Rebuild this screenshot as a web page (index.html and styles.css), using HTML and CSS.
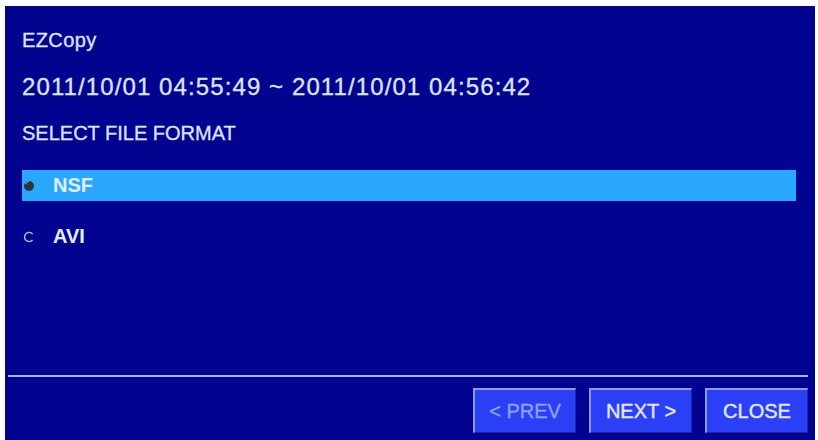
FILE: index.html
```html
<!DOCTYPE html>
<html>
<head>
<meta charset="utf-8">
<link rel="stylesheet" href="styles.css">
</head>
<body>
<div class="panel">
  <div class="title">EZCopy</div>
  <div class="range">2011/10/01 04:55:49 ~ 2011/10/01 04:56:42</div>
  <div class="heading">SELECT FILE FORMAT</div>
  <div class="option selected">
    <svg class="radio" width="14" height="14" viewBox="0 0 14 14"><circle cx="7" cy="7" r="5" fill="#2e3340"/><path d="M3.6 5.2 A4.4 4.4 0 0 1 7 2.4" stroke="#8890a8" stroke-width="1.2" fill="none"/></svg>
    <span class="label">NSF</span>
  </div>
  <div class="option">
    <svg class="radio" width="14" height="14" viewBox="0 0 14 14"><path d="M10.6 4 A4.6 4.6 0 1 0 10.6 10" stroke="#b8c0f0" stroke-width="1.4" fill="none"/></svg>
    <span class="label">AVI</span>
  </div>
  <div class="spacer"></div>
  <div class="rule"></div>
  <div class="buttons">
    <div class="btn disabled">&lt; PREV</div>
    <div class="btn">NEXT &gt;</div>
    <div class="btn">CLOSE</div>
  </div>
</div>
</body>
</html>
```

FILE: styles.css
```css
html, body {
  margin: 0;
  padding: 0;
  background: #ffffff;
}
body {
  padding: 6px 0 0 5px;
  font-family: "Liberation Sans", Arial, sans-serif;
  color: #dde4ff;
}
.panel {
  width: 810px;
  height: 434px;
  box-sizing: border-box;
  background: #020490;
  display: flex;
  flex-direction: column;
  padding: 22px 0 7px 17px;
}
.title {
  font-size: 20px;
  line-height: 24px;
  height: 24px;
  letter-spacing: 0.4px;
  -webkit-text-stroke: 0.3px #dde4ff;
}
.range {
  margin-top: 21px;
  font-size: 24px;
  line-height: 28px;
  height: 28px;
  letter-spacing: 1.1px;
  -webkit-text-stroke: 0.3px #dde4ff;
}
.heading {
  margin-top: 20px;
  font-size: 20px;
  line-height: 24px;
  height: 24px;
  -webkit-text-stroke: 0.3px #dde4ff;
}
.option {
  width: 774px;
  height: 31px;
  display: flex;
  align-items: center;
  box-sizing: border-box;
  padding-left: 0;
}
.option.selected {
  margin-top: 25px;
  background: #2aa7ff;
}
.option + .option {
  margin-top: 20px;
}
.radio {
  flex: none;
}
.label {
  margin-left: 17px;
  font-size: 20px;
  font-weight: bold;
  color: #e4ecff;
}
.spacer {
  flex: 1;
}
.rule {
  height: 2px;
  background: #a9b6f2;
  margin-left: -14px;
  margin-right: 7px;
}
.buttons {
  margin-top: 11px;
  display: flex;
  justify-content: flex-end;
  gap: 13px;
  padding-right: 7px;
}
.btn {
  width: 103px;
  height: 45px;
  box-sizing: border-box;
  background: #2b40f6;
  border-top: 2px solid #8c9cff;
  border-left: 2px solid #8c9cff;
  border-right: 1px solid #1a26b0;
  border-bottom: 1px solid #1a26b0;
  display: flex;
  align-items: center;
  justify-content: center;
  font-size: 20px;
  color: #e2e9ff;
  -webkit-text-stroke: 0.4px #e2e9ff;
}
.btn.disabled {
  color: #8ea2ff;
  -webkit-text-stroke: 0.3px #8ea2ff;
}
```
